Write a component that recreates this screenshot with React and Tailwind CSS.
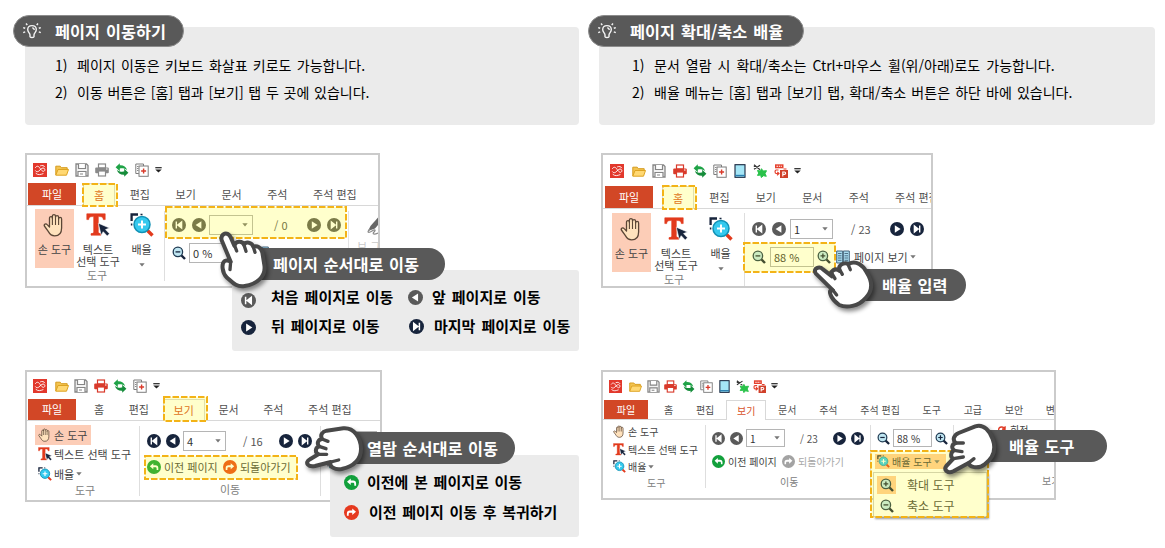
import React from "react";

const NAVY = "#17243c";
const GRAY = "#5a5a5a";

/* ---------- quick bar icons ---------- */

const LogoIcon = () => (
  <svg viewBox="0 0 14 14" className="h-full w-full">
    <rect width="14" height="14" fill="#e2382c" />
    <path d="M2.500 4.500C4 2 6 3.500 7.200 5.500S10.500 9.500 11.700 7.500C12.500 5.800 10.500 4.200 8.800 5.400L5.500 8.300C4.500 9 3 8.800 2.500 7.800M3 10.500c2 1.800 4.500 1.200 7 .2M7.500 2.800c1.800-.8 3.500-.2 4.200 1" fill="none" stroke="#fff" strokeWidth=".9" strokeLinecap="round" />
  </svg>
);

const FolderIcon = () => (
  <svg viewBox="0 0 14 14" className="h-full w-full">
    <path d="M.8 12V3.200h4.400l1.200 1.500h5.800V7" fill="#f3c451" stroke="#d69b1c" strokeWidth="1" />
    <path d="M.8 12.200 3 6.500h10.500l-2 5.700z" fill="#ffd873" stroke="#dda321" strokeWidth="1" />
  </svg>
);

const SaveIcon = () => (
  <svg viewBox="0 0 14 14" className="h-full w-full">
    <path d="M1 1h10.500L13 2.500V13H1z" fill="#f2f2f2" stroke="#858585" strokeWidth="1.300" />
    <path d="M3.500 1v4.500h7V1M3 13V8.500h8V13M5 11h3" fill="#fff" stroke="#858585" strokeWidth="1.200" />
  </svg>
);

const PrintIcon = ({ color = "#d93a2b" }) => (
  <svg viewBox="0 0 14 14" className="h-full w-full">
    <rect x="3.500" y="1" width="7" height="4" fill="#fff" stroke={color} strokeWidth="1.200" />
    <rect x=".2" y="4.500" width="13.600" height="5.800" rx="1" fill={color} />
    <rect x="3.500" y="8" width="7" height="5" fill="#fff" stroke={color} strokeWidth="1.200" />
    <path d="M11 6h1.500" stroke="#fff" />
  </svg>
);

const SyncIcon = () => (
  <svg viewBox="0 0 14 14" className="h-full w-full">
    <path d="M.6 4.300 4.800.3v2c3.700-.2 6.200 1.200 7.400 5-2.200-1.900-4.300-2.300-7.400-1.900v2.900z" fill="#1fa347" />
    <path d="M13.400 9.700 9.200 13.700v-2c-3.700.2-6.200-1.200-7.400-5 2.200 1.900 4.300 2.300 7.400 1.900V5.700z" fill="#158c3a" />
  </svg>
);

const CopyIcon = () => (
  <svg viewBox="0 0 14 14" className="h-full w-full">
    <path d="M8.500 3V1H.800v9.500h3" fill="none" stroke="#7d7d7d" />
    <rect x="4" y="3" width="9.200" height="10.300" fill="#fff" stroke="#7d7d7d" />
    <path d="M8.600 5.500v5M6.100 8h5" stroke="#d93a2b" strokeWidth="1.400" />
    <path d="M2 3.500h1.500M2 5.500h1.500M2 7.500h1.500" stroke="#8a8a8a" />
  </svg>
);

const TabletIcon = () => (
  <svg viewBox="0 0 14 14" className="h-full w-full">
    <rect x="2" y=".7" width="10" height="12.600" fill="#a5e6f7" stroke={NAVY} strokeWidth="1.100" />
    <path d="M2 11.500h10" stroke="#2b7fb0" strokeWidth="1.400" />
  </svg>
);

const PuzzleIcon = () => (
  <svg viewBox="0 0 14 14" className="h-full w-full">
    <path d="m1 .8 6 5M1 5.200l6-4M.8 2.500h3" stroke="#333" strokeWidth="1.200" />
    <path d="M4.500 6.500 7.500 7l1-2.300L10 7l3.500-.3-1.500 3 1.300 2.600-2.800-.6L8.300 13.500 7.700 11l-3.200.4 1.200-2.300z" fill="#29c24a" stroke="#29c24a" strokeWidth="1" />
  </svg>
);

const PptIcon = () => (
  <svg viewBox="0 0 14 14" className="h-full w-full">
    <path d="M1 .3h8.500v4H1z" fill="#e5402d" />
    <path d="M2.500 2.300h5.500" stroke="#fff" strokeWidth="1.100" strokeDasharray="1.500 .8" />
    <path d="M4.500 6H2.200c-1.500 0-1.500 3.500 0 3.500h2M3.300 7.800 5 9.500l-2 1.700M9.500 5h3" fill="none" stroke="#e5402d" strokeWidth="1.200" />
    <rect x="6" y="6" width="8" height="8" fill="#d0402a" />
    <path d="M8.800 12.500V8h1.500c1.800 0 1.800 2.400 0 2.400H9" fill="none" stroke="#fff" strokeWidth="1.100" />
  </svg>
);

const MoreIcon = () => (
  <svg viewBox="0 0 7 6" className="h-[6px] w-[7px]">
    <path d="M.3.7h6.400" stroke="#222" strokeWidth="1.200" />
    <path d="M.3 2.400h6.400L3.500 5.600z" fill="#222" />
  </svg>
);

const Caret = ({ color = "#777" }) => (
  <svg viewBox="0 0 6 4" className="h-[4px] w-[6px] shrink-0">
    <path d="M.3.300h5.400L3 3.500z" fill={color} />
  </svg>
);

/* ---------- ribbon icons ---------- */

const PalmIcon = ({ className }) => (
  <svg viewBox="0 0 24 24" className={`shrink-0 ${className}`}>
    <path
      d="M6.500 14V5.200c0-2 2.900-2 2.900 0V3.200c0-2.200 3.100-2.200 3.100 0v1c0-2.200 3.100-2.200 3.100 0v1.700c0-2.100 3-2.100 3 0V15c0 5-2.600 7.800-6.900 7.800-3.300 0-5-1.800-6.300-4.200L1.400 13c-.8-1.800 1.500-2.900 2.800-1.400z"
      fill="#ffe2bd"
      stroke="#5b4636"
      strokeWidth="1.300"
      strokeLinejoin="round"
    />
    <path d="M9.400 5v7M12.500 4.200V12M15.600 5.500V12" stroke="#5b4636" strokeWidth="1.100" />
  </svg>
);

const TextSelectIcon = ({ className }) => (
  <svg viewBox="0 0 24 24" className={`shrink-0 ${className}`}>
    <path d="M.8.800h18.400v5.800h-1.900c-.3-2.200-1.300-3-3.300-3h-1.700v15c0 1.500.7 1.900 2.700 2v1.600H5v-1.600c2-.1 2.700-.5 2.700-2v-15H6c-2 0-3 .8-3.300 3H.8z" fill="#e23a1d" stroke="#e23a1d" strokeWidth=".6" />
    <path d="M12.300 10.200 23.500 15l-4 1.600 4 4.200-2.300 2.200-4-4.300-2 3.600z" fill={NAVY} stroke="#fff" strokeWidth=".6" />
  </svg>
);

const ZoomToolIcon = ({ className }) => (
  <svg viewBox="0 0 24 24" className={`shrink-0 ${className}`}>
    <path d="M1.600 8V1.500H8" fill="none" stroke={NAVY} strokeWidth="2.300" />
    <path d="M1.600 10.500v2M10.500 1.500h2" fill="none" stroke={NAVY} strokeWidth="1.500" />
    <path d="m17.500 17.500 5 5" stroke="#e23a1d" strokeWidth="3.400" />
    <circle cx="12" cy="11.500" r="8" fill="#35c9ee" stroke="#1191b5" strokeWidth="1.500" />
    <path d="M12 7.500v8M8 11.500h8" stroke="#fff" strokeWidth="2" />
  </svg>
);

const Magnifier = ({ plus, fill = "#bfe6f2", className }) => (
  <svg viewBox="0 0 14 14" className={`shrink-0 ${className}`}>
    <path d="m9 9 4 4" stroke={NAVY} strokeWidth="2.400" />
    <circle cx="5.900" cy="5.900" r="4.700" fill={fill} stroke="#1f3a52" strokeWidth="1.300" />
    <path d={plus ? "M5.900 3.500v4.800M3.500 5.900h4.800" : "M3.500 5.900h4.800"} stroke={NAVY} strokeWidth="1.300" />
  </svg>
);

const NavIcon = ({ type, color = NAVY, className = "size-[14px]" }) => (
  <svg viewBox="0 0 14 14" className={`shrink-0 ${className}`}>
    <circle cx="7" cy="7" r="7" fill={color} />
    {type === "first" && <path d="M4.300 3.600v6.800M9.600 4v6L5.800 7z" fill="#fff" stroke="#fff" strokeWidth="1.400" />}
    {type === "prev" && <path d="M9.400 3.200v7.600L3.600 7z" fill="#fff" />}
    {type === "next" && <path d="M4.800 3.200v7.600L10.600 7z" fill="#fff" />}
    {type === "last" && <path d="M9.700 3.600v6.800M4.400 4v6L8.200 7z" fill="#fff" stroke="#fff" strokeWidth="1.400" />}
    {type === "back" && <path d="M2.800 6.300 6.300 3.300v1.900h2.200c2 0 2.800 1 2.800 2.800v2H9.600V8.600c0-1-.4-1.300-1.200-1.300H6.300v2z" fill="#fff" />}
    {type === "forward" && <path d="M11.200 6.300 7.700 3.300v1.900H5.500c-2 0-2.800 1-2.800 2.800v2h1.700V8.600c0-1 .4-1.300 1.200-1.300h2.100v2z" fill="#fff" />}
  </svg>
);

const BookIcon = () => (
  <svg viewBox="0 0 14 14" className="size-[14px] shrink-0">
    <path d="M.7 1h6v12h-6zM7.300 1h6v12h-6z" fill="#a9dcf0" stroke="#44657c" strokeWidth="1" />
    <path d="M2 3.500h3.500M2 5.800h3.500M2 8h3.500M2 10.300h3.500M8.500 3.500H12M8.500 5.800H12M8.500 8H12M8.500 10.300H12" stroke="#44657c" strokeWidth=".9" />
  </svg>
);

const PenIcon = () => (
  <svg viewBox="0 0 16 20" className="h-[20px] w-[16px] shrink-0">
    <path d="M1 14 3.500 9 11 .5l4 3L8 11.500z" fill="#666" />
    <path d="M3 12c-4 4-1 4 2 2s4-1 2 1 0 3 4 1" fill="none" stroke="#8a8a8a" strokeWidth="1.200" />
  </svg>
);

const BulbIcon = () => (
  <svg viewBox="0 0 20 18" className="h-[18px] w-[20px]">
    <path d="M10 3.600c-2.700 0-4.300 1.800-4.300 4 0 2.500 2 3.200 2.300 5.200v2c0 .9 4 .9 4 0v-2c.3-2 2.300-2.700 2.300-5.200 0-2.200-1.600-4-4.300-4zM10.300 5.800c1.200.2 1.900 1 2 2.200" fill="none" stroke="#f4f4f4" strokeWidth="1.400" />
    <path d="M4 1.600 5.300 3M16 1.600 14.700 3M1.200 5.600l2 .7M18.800 5.600l-2 .7M1.200 10.600l2-.7M18.800 10.600l-2-.7" stroke="#f4f4f4" strokeWidth="1.500" />
  </svg>
);

/* ---------- shared pieces ---------- */

const quickIcons = {
  logo: <LogoIcon />,
  folder: <FolderIcon />,
  save: <SaveIcon />,
  print: <PrintIcon />,
  printOff: <PrintIcon color="#8a8a8a" />,
  sync: <SyncIcon />,
  copy: <CopyIcon />,
  tablet: <TabletIcon />,
  puzzle: <PuzzleIcon />,
  ppt: <PptIcon />,
};

const QuickBar = ({ items, className, iconClass, stepClass }) => (
  <div className={`flex shrink-0 items-center ${className}`}>
    {items.map((name, i) => (
      <div key={name} className={`flex shrink-0 ${i === 0 ? "mr-[2px]" : ""} ${stepClass}`}>
        <div className={iconClass}>{quickIcons[name]}</div>
      </div>
    ))}
    <MoreIcon />
  </div>
);

const TabBar = ({ tabs, active, className, fileClass, gapClass }) => (
  <div className={`flex shrink-0 items-stretch whitespace-nowrap border-b border-[#d8d8d8] text-[#505050] ${className}`}>
    <div className={`flex shrink-0 items-center justify-center bg-[#d24726] text-white ${fileClass}`}>파일</div>
    <div className={`flex items-center ${gapClass}`}>
      {tabs.map((tab) => (
        <span
          key={tab}
          className={`shrink-0 ${tab === active ? "-mx-[11px] -mb-px flex items-center self-stretch border-x border-t border-[#d8d8d8] bg-white px-[10px] text-[#d8522b]" : ""}`}
        >
          {tab}
        </span>
      ))}
    </div>
  </div>
);

const Field = ({ children, caret, className }) => (
  <div className={`flex shrink-0 items-center justify-between border border-[#b5b5b5] bg-white pl-[3px] pr-[4px] text-[#333] ${className}`}>
    <span className="whitespace-nowrap">{children}</span>
    {caret && <Caret />}
  </div>
);

const BigTool = ({ icon, label, className, caret }) => (
  <div className={`flex h-[59px] shrink-0 flex-col items-center pt-[4px] ${className}`}>
    {icon}
    <div className="mt-[6px] whitespace-pre text-center leading-[12px]">{label}</div>
    {caret && (
      <div className="mt-[8px]">
        <Caret />
      </div>
    )}
  </div>
);

const HomeTools = ({ midClass, className }) => (
  <div className={`flex shrink-0 flex-col text-[#444] ${className}`}>
    <div className="flex">
      <BigTool className="w-[39px] bg-[#fccdb7]" icon={<PalmIcon className="size-[24px]" />} label="손 도구" />
      <BigTool className={midClass} icon={<TextSelectIcon className="size-[24px]" />} label={"텍스트\n선택 도구"} />
      <BigTool className="w-[39px]" icon={<ZoomToolIcon className="size-[24px]" />} label="배율" caret />
    </div>
    <div className="w-[124px] text-center leading-[15px] text-[#808080]">도구</div>
  </div>
);

const SmallTools = ({ rowClass, iconClass, highlightClass = "" }) => (
  <>
    <div className={`flex items-center gap-[2px] pl-[3px] ${rowClass} ${highlightClass}`}>
      <PalmIcon className={iconClass} />손 도구
    </div>
    <div className={`flex items-center gap-[2px] pl-[3px] ${rowClass}`}>
      <TextSelectIcon className={iconClass} />텍스트 선택 도구
    </div>
    <div className={`flex items-center gap-[2px] pl-[3px] ${rowClass}`}>
      <ZoomToolIcon className={iconClass} />배율
      <Caret />
    </div>
  </>
);

const Highlight = ({ className }) => (
  <div className={`absolute bg-[#ffff00]/20 ${className}`}>
    <svg className="absolute inset-0 h-full w-full overflow-visible">
      <rect width="100%" height="100%" fill="none" stroke="#f3b317" strokeWidth="2" strokeDasharray="6.500 2" />
    </svg>
  </div>
);

const Callout = ({ className, children }) => (
  <div className={`absolute flex items-center whitespace-nowrap rounded-r-full bg-[#595959] text-[16.300px] font-bold text-white [word-spacing:1px] ${className}`}>
    {children}
  </div>
);

const Pointer = ({ viewBox, className, body, lines }) => (
  <svg viewBox={viewBox} className={`absolute overflow-visible drop-shadow-[2px_3px_2px_rgba(0,0,0,0.45)] ${className}`}>
    <g stroke="#484848" strokeWidth="12" strokeLinecap="round" strokeLinejoin="round">
      <path d={body} fill="#fff" />
      <path d={lines} fill="none" strokeWidth="10" />
    </g>
  </svg>
);

const TipBox = ({ title, pillClass, boxClass, tips }) => (
  <div className="relative h-[110px] shrink-0 pt-[12px]">
    <div className={`flex h-[98px] flex-col rounded-[4px] bg-[#ebebeb] pt-[25px] ${boxClass}`}>
      {tips.map((tip, i) => (
        <div key={tip.text} className="flex h-[27px] items-center whitespace-nowrap text-[14px] text-black">
          <span className="w-[22px]">{i + 1})</span>
          <span className={tip.spacing}>{tip.text}</span>
        </div>
      ))}
    </div>
    <div className={`absolute left-0 top-0 flex h-[32px] items-center rounded-full border border-[#8c8c8c] bg-[#595959] pl-[8px] text-[16.300px] font-bold text-white [word-spacing:1.500px] ${pillClass}`}>
      <BulbIcon />
      <span className="whitespace-nowrap">{title}</span>
    </div>
  </div>
);

/* ---------- figures ---------- */

const panel = "flex h-full w-full flex-col overflow-hidden border-2 border-[#cbcbcb] bg-white";

const PageOrderFigure = () => (
  <div className="relative ml-[12px] mt-[28px] h-[135px] w-[355px] shrink-0 text-[11px]">
    <div className={panel}>
      <QuickBar
        items={["logo", "folder", "save", "printOff", "sync", "copy"]}
        className="h-[28px] pl-[6px] pt-[2px]"
        iconClass="size-[14px]"
        stepClass="w-[20px]"
      />
      <TabBar
        tabs={["홈", "편집", "보기", "문서", "주석", "주석 편집"]}
        active="홈"
        className="h-[23px] pl-px"
        fileClass="w-[48px]"
        gapClass="gap-[25.600px] pl-[18px]"
      />
      <div className="flex flex-1">
        <HomeTools midClass="w-[48px]" className="w-[137px] pl-[8px] pt-[3px]" />
        <div className="mt-[5px] h-[70px] w-[184px] shrink-0 border-l border-[#dedede] pl-[7px] pt-[4px]">
          <div className="flex h-[20px] items-center">
            <NavIcon type="first" color={GRAY} />
            <NavIcon type="prev" color={GRAY} className="ml-[6px] size-[14px]" />
            <Field caret className="ml-[3px] h-[20px] w-[44px]" />
            <span className="ml-[21px] w-[33px] text-[#555]">/ 0</span>
            <NavIcon type="next" color={GRAY} />
            <NavIcon type="last" color={GRAY} className="ml-[6px] size-[14px]" />
          </div>
          <div className="mt-[8px] flex h-[20px] items-center">
            <Magnifier className="size-[14px]" />
            <Field className="ml-[3px] h-[20px] w-[44px]">0 %</Field>
            <div className="ml-[22px]">
              <BookIcon />
            </div>
          </div>
        </div>
        <div className="mt-[5px] w-[40px] shrink-0 border-l border-[#e4e4e4] pl-[8px] pt-[6px] text-[#c9c9c9]">
          <div className="pl-[10px]">
            <PenIcon />
          </div>
          <div className="mt-[2px] whitespace-nowrap leading-[14px]">보 그</div>
        </div>
      </div>
    </div>
    <Highlight className="left-[58px] top-[31px] h-[22px] w-[34px]" />
    <Highlight className="left-[141px] top-[54px] h-[31px] w-[180px]" />
    <div className="absolute left-[207px] top-[117px] grid h-[81px] w-[347px] grid-cols-[167px_1fr] content-start gap-y-[8px] rounded-[3px] bg-[#ebebeb] pl-[9px] pt-[17px] text-[15px] font-bold text-black [word-spacing:1.800px]">
      <div className="flex h-[21px] items-center whitespace-nowrap">
        <NavIcon type="first" color={GRAY} className="mr-[15px] mt-[5px] size-[15px]" />
        처음 페이지로 이동
      </div>
      <div className="flex h-[21px] items-center whitespace-nowrap">
        <NavIcon type="prev" color={GRAY} className="mr-[9px] size-[15px]" />
        앞 페이지로 이동
      </div>
      <div className="flex h-[21px] items-center whitespace-nowrap">
        <NavIcon type="next" className="mr-[15px] mt-[2px] size-[15px]" />
        뒤 페이지로 이동
      </div>
      <div className="flex h-[21px] items-center whitespace-nowrap">
        <NavIcon type="last" className="ml-px mr-[10px] size-[15px]" />
        마지막 페이지로 이동
      </div>
    </div>
    <Callout className="left-[230px] top-[95px] h-[32px] w-[190px] pl-[18px]">페이지 순서대로 이동</Callout>
    <Pointer
      viewBox="48 249 162 189"
      className="left-[191px] top-[75px] h-[63px] w-[54px]"
      body="M65 286C60 264 84 258 92 277L103 302C106 288 126 286 132 299C138 289 155 291 160 305C172 300 183 308 187 322L193 360C199 396 168 418 134 423C106 427 96 410 80 397C67 384 63 356 74 348C82 344 87 347 92 350Z"
      lines="M92 350L90 374M104 302L110 318M132 300L138 319M160 306L165 322"
    />
  </div>
);

const ViewOrderFigure = () => (
  <div className="relative ml-[12px] mt-[82px] h-[132px] w-[357px] shrink-0 text-[11px]">
    <div className={panel}>
      <QuickBar
        items={["logo", "folder", "save", "print", "sync", "copy"]}
        className="h-[27px] pl-[6px]"
        iconClass="size-[14px]"
        stepClass="w-[19.600px]"
      />
      <TabBar
        tabs={["홈", "편집", "보기", "문서", "주석", "주석 편집"]}
        active="보기"
        className="h-[22px] pl-px"
        fileClass="w-[48px]"
        gapClass="gap-[24.600px] pl-[18px]"
      />
      <div className="flex flex-1 whitespace-nowrap text-[#444]">
        <div className="flex w-[112px] shrink-0 flex-col pl-[8px] pt-[4px]">
          <SmallTools rowClass="h-[19.500px]" iconClass="size-[14px]" highlightClass="w-[56px] bg-[#fccdb7]" />
          <div className="pl-[40px] leading-[13px] text-[#808080]">도구</div>
        </div>
        <div className="mt-[5px] h-[70px] w-[181px] shrink-0 border-l border-[#dedede] pl-[7px] pt-[5px]">
          <div className="flex h-[20px] items-center">
            <NavIcon type="first" />
            <NavIcon type="prev" className="ml-[5px] size-[14px]" />
            <Field caret className="ml-[3px] h-[20px] w-[43px]">4</Field>
            <span className="ml-[17px] w-[36px] text-[#555]">/ 16</span>
            <NavIcon type="next" />
            <NavIcon type="last" className="ml-[5px] size-[14px]" />
          </div>
          <div className="mt-[8px] flex h-[16px] items-center">
            <NavIcon type="back" color="#12a03c" />
            <span className="ml-[3px] w-[59px]">이전 페이지</span>
            <NavIcon type="forward" color="#ea4a1c" />
            <span className="ml-[3px]">되돌아가기</span>
          </div>
          <div className="mt-[7px] pl-[73px] leading-[14px] text-[#808080]">이동</div>
        </div>
        <div className="mt-[5px] h-[70px] w-[60px] shrink-0 border-l border-[#dedede] pl-[6px] pt-[5px]">
          <Field className="h-[20px] w-[50px]" />
          <div className="mt-[8px]">
            <ZoomToolIcon className="size-[14px]" />
          </div>
        </div>
      </div>
    </div>
    <Highlight className="left-[139px] top-[27px] h-[24px] w-[43px]" />
    <Highlight className="left-[120px] top-[86px] h-[23px] w-[152px]" />
    <div className="absolute left-[305px] top-[85px] flex h-[82px] w-[249px] flex-col rounded-[3px] bg-[#ebebeb] pl-[14px] pt-[17px] text-[15px] font-bold text-black [word-spacing:1.500px]">
      <div className="flex h-[21px] items-center whitespace-nowrap">
        <NavIcon type="back" color="#12a03c" className="mr-[8px] size-[15px]" />
        이전에 본 페이지로 이동
      </div>
      <div className="mt-[9px] flex h-[21px] items-center whitespace-nowrap">
        <NavIcon type="forward" color="#e6391f" className="mr-[10px] size-[15px]" />
        이전 페이지 이동 후 복귀하기
      </div>
    </div>
    <Callout className="left-[325px] top-[62px] h-[32px] w-[165px] pl-[17px]">열람 순서대로 이동</Callout>
    <Pointer
      viewBox="300 177 201 150"
      className="left-[275px] top-[54px] h-[50px] w-[67px]"
      body="M330 283L355 268C344 262 346 248 357 244C350 234 354 224 366 222C360 210 366 200 380 197L430 190C462 187 482 218 483 250C484 288 455 305 425 312C405 316 386 304 392 291L345 303C325 307 312 293 330 283Z"
      lines="M366 222L384 229M357 244L378 251M355 268L380 268M392 291L416 285"
    />
  </div>
);

const ZoomInputFigure = () => (
  <div className="relative ml-[13px] mt-[28px] h-[135px] w-[332px] shrink-0 text-[11px]">
    <div className={panel}>
      <QuickBar
        items={["logo", "folder", "save", "print", "sync", "copy", "tablet", "puzzle", "ppt"]}
        className="h-[31px] pl-[7px]"
        iconClass="size-[14px]"
        stepClass="w-[20.200px]"
      />
      <TabBar
        tabs={["홈", "편집", "보기", "문서", "주석", "주석 편집"]}
        active="홈"
        className="h-[23px] pl-[2px]"
        fileClass="w-[48px]"
        gapClass="gap-[26.200px] pl-[20px]"
      />
      <div className="flex flex-1">
        <HomeTools midClass="w-[50px]" className="w-[141px] pl-[9px] pt-[4px]" />
        <div className="mt-[4px] h-[73px] w-[184px] shrink-0 whitespace-nowrap border-l border-[#dedede] pl-[7px] pt-[6px] text-[#444]">
          <div className="flex h-[20px] items-center">
            <NavIcon type="first" color={GRAY} />
            <NavIcon type="prev" color={GRAY} className="ml-[6px] size-[14px]" />
            <Field caret className="ml-[4px] h-[20px] w-[43px]">1</Field>
            <span className="ml-[18px] w-[39px] text-[#555]">/ 23</span>
            <NavIcon type="next" />
            <NavIcon type="last" className="ml-[6px] size-[14px]" />
          </div>
          <div className="mt-[8px] flex h-[20px] items-center">
            <Magnifier className="size-[14px]" />
            <Field className="ml-[4px] h-[20px] w-[44px]">88 %</Field>
            <Magnifier plus className="ml-[3px] mr-[5px] size-[14px]" />
            <BookIcon />
            <span className="ml-[4px] mr-[2px]">페이지 보기</span>
            <Caret />
          </div>
        </div>
      </div>
    </div>
    <Highlight className="left-[62px] top-[33px] h-[23px] w-[33px]" />
    <Highlight className="left-[143px] top-[90px] h-[29px] w-[91px]" />
    <Callout className="left-[259px] top-[116px] h-[32px] w-[106px] pl-[22px]">배율 입력</Callout>
    <Pointer
      viewBox="210 339 201 162"
      className="left-[209px] top-[105px] h-[54px] w-[67px]"
      body="M227 385C218 370 238 362 249 373L276 394C268 378 286 367 299 378C292 360 312 350 326 357C348 344 370 362 380 382C398 410 398 438 376 460C355 484 320 490 298 480C282 468 276 462 272 450C266 436 274 432 279 436Z"
      lines="M279 436L290 450M276 386L285 401M298 372L307 388M324 358L331 374"
    />
  </div>
);

const ZoomToolFigure = () => (
  <div className="relative ml-[13px] mt-[82px] h-[130px] w-[455px] shrink-0 text-[10px]">
    <div className={panel}>
      <QuickBar
        items={["logo", "folder", "save", "print", "sync", "copy", "tablet", "puzzle", "ppt"]}
        className="h-[28px] pl-[6px]"
        iconClass="size-[13px]"
        stepClass="w-[17.800px]"
      />
      <TabBar
        tabs={["홈", "편집", "보기", "문서", "주석", "주석 편집", "도구", "고급", "보안", "변환"]}
        active="보기"
        className="h-[20px] pl-px"
        fileClass="w-[44px]"
        gapClass="gap-[22.700px] pl-[16px]"
      />
      <div className="flex flex-1 whitespace-nowrap text-[#444]">
        <div className="flex w-[102px] shrink-0 flex-col pl-[7px] pt-[3px]">
          <SmallTools rowClass="h-[17.600px]" iconClass="size-[13px]" />
          <div className="pl-[37px] leading-[13px] text-[#808080]">도구</div>
        </div>
        <div className="mt-[5px] h-[63px] w-[165px] shrink-0 border-l border-[#dedede] pl-[6px] pt-[4px]">
          <div className="flex h-[18px] items-center">
            <NavIcon type="first" color={GRAY} className="size-[13px]" />
            <NavIcon type="prev" color={GRAY} className="ml-[5px] size-[13px]" />
            <Field caret className="ml-[3px] h-[18px] w-[39px]">1</Field>
            <span className="ml-[15px] w-[33px] text-[#555]">/ 23</span>
            <NavIcon type="next" className="size-[13px]" />
            <NavIcon type="last" className="ml-[5px] size-[13px]" />
          </div>
          <div className="mt-[7px] flex h-[14px] items-center">
            <NavIcon type="back" color="#12a03c" className="size-[13px]" />
            <span className="ml-[3px] w-[54px]">이전 페이지</span>
            <NavIcon type="forward" color="#a3a3a3" className="size-[13px]" />
            <span className="ml-[3px] text-[#a8a8a8]">되돌아가기</span>
          </div>
          <div className="mt-[7px] pl-[68px] leading-[14px] text-[#808080]">이동</div>
        </div>
        <div className="mt-[5px] h-[63px] w-[83px] shrink-0 border-l border-[#dedede] pl-[4px] pt-[4px]">
          <div className="flex h-[18px] items-center pl-[2px]">
            <Magnifier className="size-[13px]" />
            <Field className="ml-[3px] h-[18px] w-[39px]">88 %</Field>
            <Magnifier plus className="ml-[3px] size-[13px]" />
          </div>
          <div className="mt-[7px] flex h-[15px] w-[71px] items-center bg-[#ffca9c] pl-[2px]">
            <ZoomToolIcon className="size-[13px]" />
            <span className="ml-[2px] mr-[2px]">배율 도구</span>
            <Caret />
          </div>
        </div>
        <div className="mt-[5px] flex h-[63px] w-[120px] shrink-0 flex-col justify-between border-l border-[#dedede] pl-[43px]">
          <div className="flex items-center gap-[3px] leading-[8px]">
            <svg viewBox="0 0 12 12" className="size-[10px]">
              <path d="M2 10V5.500C2 2 8.500 1 9.500 5M9.800 1.500 9.600 5.400 6 4.800" fill="none" stroke="#df3a25" strokeWidth="1.600" />
            </svg>
            회전
          </div>
          <div className="pl-[45px] leading-[14px] text-[#808080]">보기</div>
        </div>
      </div>
    </div>
    <div className="absolute left-[272px] top-[102px] flex h-[45px] w-[114px] flex-col border border-[#ccc] bg-white pl-[3px] pt-px text-[12px] text-[#444] shadow-[2px_2px_2px_rgba(0,0,0,0.4)]">
      <div className="flex h-[21px] items-center">
        <div className="flex h-[18px] w-[19px] items-center justify-center bg-[#ffca9c]">
          <Magnifier plus className="size-[14px]" />
        </div>
        <span className="ml-[11px] whitespace-nowrap">확대 도구</span>
      </div>
      <div className="flex h-[21px] items-center">
        <div className="flex w-[19px] justify-center">
          <Magnifier className="size-[14px]" />
        </div>
        <span className="ml-[11px] whitespace-nowrap">축소 도구</span>
      </div>
    </div>
    <Highlight className="left-[270px] top-[81px] h-[66px] w-[117px]" />
    <Callout className="left-[384px] top-[60px] h-[32px] w-[122px] pl-[24px]">배율 도구</Callout>
    <Pointer
      viewBox="120 165 189 171"
      className="left-[339px] top-[50px] h-[57px] w-[63px]"
      body="M139 303L160 281C150 276 152 262 162 256C153 248 156 238 167 234C156 224 162 210 176 204L226 184C252 175 270 200 278 222C290 255 278 280 254 298C234 314 206 306 207 293L160 319C144 327 130 315 139 303Z"
      lines="M167 234L190 234M162 256L186 260M160 281L190 276M207 293L222 281"
    />
  </div>
);

const App = () => {
  return (
    <div
      lang="ko"
      className="flex h-[548px] w-[1165px] overflow-hidden bg-white font-['Noto_Sans_CJK_KR',sans-serif]"
    >
      <section className="flex w-[588px] shrink-0 flex-col pl-[13px] pt-[15px]">
        <TipBox
          title="페이지 이동하기"
          pillClass="w-[171px] gap-[13px]"
          boxClass="ml-[12px] w-[554px] pl-[30px]"
          tips={[
            { text: "페이지 이동은 키보드 화살표 키로도 가능합니다.", spacing: "[word-spacing:1.400px]" },
            { text: "이동 버튼은 [홈] 탭과 [보기] 탭 두 곳에 있습니다.", spacing: "[word-spacing:0.800px]" },
          ]}
        />
        <PageOrderFigure />
        <ViewOrderFigure />
      </section>
      <section className="flex w-[577px] shrink-0 flex-col pt-[15px]">
        <TipBox
          title="페이지 확대/축소 배율"
          pillClass="w-[216px] gap-[13px]"
          boxClass="ml-[11px] w-[556px] pl-[33px]"
          tips={[
            { text: "문서 열람 시 확대/축소는 Ctrl+마우스 휠(위/아래)로도 가능합니다.", spacing: "[word-spacing:2.100px]" },
            { text: "배율 메뉴는 [홈] 탭과 [보기] 탭, 확대/축소 버튼은 하단 바에 있습니다.", spacing: "[word-spacing:1.200px]" },
          ]}
        />
        <ZoomInputFigure />
        <ZoomToolFigure />
      </section>
    </div>
  );
};

export default App;
